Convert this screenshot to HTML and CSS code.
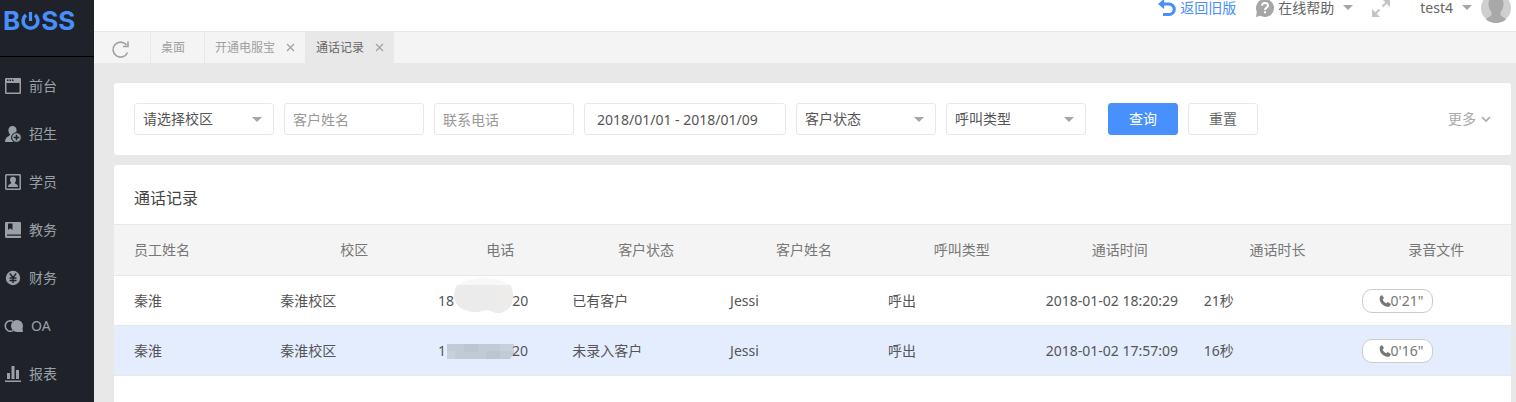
FILE: index.html
```html
<!DOCTYPE html>
<html lang="zh-CN">
<head>
    <meta charset="UTF-8">
    <meta name="viewport" content="width=device-width, initial-scale=1.0">
    <title>通话记录</title>
    <link rel="stylesheet" href="styles.css">
</head>
<body>

<aside class="sidebar">
    <div class="logo">
        <span>B</span>
        <svg width="19" height="20" viewBox="0 0 19 20" fill="none" stroke="currentColor" stroke-width="3.600">
            <path d="M5 4A7.400 7.400 0 1 0 14 4"/>
            <path d="M9.500 1v9" stroke-width="3.200"/>
        </svg>
        <span>SS</span>
    </div>
    <nav class="menu">
        <a href="#">
            <svg width="16" height="16" viewBox="0 0 16 16"><path fill="currentColor" fill-rule="evenodd" d="M1 0h14a1 1 0 0 1 1 1v14a1 1 0 0 1-1 1H1a1 1 0 0 1-1-1V1a1 1 0 0 1 1-1zM1.500 5v9.500h13V5zM2 1.500v1.500h1.500V1.500zM4.500 1.500v1.500H6V1.500zM7 1.500v1.500h1.500V1.500z"/></svg>
            前台
        </a>
        <a href="#">
            <svg width="16" height="16" viewBox="0 0 16 16">
                <path fill="currentColor" d="M7.500 0C10 0 11.600 1.800 11.600 4c0 1-.3 2-.9 2.800A5 5 0 0 0 8 15.500V16H0c0-3.500 1.500-5 4.500-6.500.6-.4.6-1 .1-1.700C3.700 6.700 3.400 5.300 3.400 4 3.400 1.800 5 0 7.500 0z"/>
                <circle cx="11.500" cy="11.500" r="4.800" fill="currentColor" stroke="#1f2329" stroke-width="1"/>
                <path d="M11.500 8.700v5.600M8.700 11.500h5.600" stroke="#1f2329" stroke-width="1.600"/>
            </svg>
            招生
        </a>
        <a href="#">
            <svg width="16" height="16" viewBox="0 0 16 16">
                <rect x=".8" y=".8" width="14.400" height="14.400" rx=".5" fill="none" stroke="currentColor" stroke-width="1.500"/>
                <path fill="currentColor" d="M8 2.800c1.900 0 3 1.300 3 3 0 1.200-.4 2-1.100 2.700v.9c1.800.6 3.100 1.200 3.100 3.600H3c0-2.400 1.300-3 3.100-3.600v-.9C5.400 7.800 5 7 5 5.800c0-1.700 1.100-3 3-3z"/>
            </svg>
            学员
        </a>
        <a href="#">
            <svg width="16" height="16" viewBox="0 0 16 16"><path fill="currentColor" fill-rule="evenodd" d="M1 0h14a1 1 0 0 1 1 1v11.500H2v1.300h14V16H1.500A1.500 1.500 0 0 1 0 14.500V1a1 1 0 0 1 1-1zM3 1.500V8l2.200-1.800L7.500 8V1.500z"/></svg>
            教务
        </a>
        <a href="#">
            <svg width="16" height="16" viewBox="0 0 16 16">
                <circle cx="8" cy="8" r="7.200" fill="currentColor"/>
                <path d="M4.800 3.500L8 7.500l3.200-4M8 7.500v5.500M4.500 8h7M4.500 10.500h7" fill="none" stroke="#1f2329" stroke-width="1.400"/>
            </svg>
            财务
        </a>
        <a href="#">
            <svg width="18" height="16" viewBox="0 0 18 16">
                <path d="M8 3.300A5.300 5.300 0 1 0 8 12.700" fill="none" stroke="currentColor" stroke-width="1.500"/>
                <path fill="currentColor" d="M12 2a6 6 0 0 1 5.500 8.300l.5 3.700h-6A6 6 0 0 1 12 2z"/>
            </svg>
            OA
        </a>
        <a href="#">
            <svg width="16" height="16" viewBox="0 0 16 16"><path fill="currentColor" d="M2 7h3v6H2zM6.500 0h3v13h-3zM11 4h3v9h-3zM0 14.500h16V16H0z"/></svg>
            报表
        </a>
    </nav>
</aside>

<div class="main">
    <header class="topbar">
        <a class="back" href="#">
            <svg width="18" height="18" viewBox="0 0 18 18"><path d="M3 5h8a5 5 0 0 1 0 10.500H5" fill="none" stroke="currentColor" stroke-width="3.200"/><path d="M0 5l6-5v10z" fill="currentColor"/></svg>
            返回旧版
        </a>
        <button class="top-item help">
            <svg width="18" height="18" viewBox="0 0 18 18"><path fill="#a6a6a6" d="M9 0a9 9 0 1 1-4.500 16.800L0 18l.8-5.200A9 9 0 0 1 9 0z"/><path d="M6 6.800C6 3 12 3 12 6.600c0 2-3 2.100-3 4.400M9 12.200v2" fill="none" stroke="#fff" stroke-width="2"/></svg>
            在线帮助
            <i class="caret"></i>
        </button>
        <button class="full" aria-label="全屏">
            <svg width="18" height="18" viewBox="0 0 18 18" fill="none" stroke="#c4c4c4" stroke-width="2"><path d="M10.500 7.500L15 3M7.500 10.500L3 15"/><path fill="#c4c4c4" stroke="none" d="M10 0h8v8l-2.800-2.800-2.400-2.400zM8 18H0v-8l2.800 2.800 2.400 2.400z"/></svg>
        </button>
        <button class="top-item user">
            test4
            <i class="caret"></i>
            <svg width="30" height="30" viewBox="0 0 30 30"><circle cx="15" cy="15" r="15" fill="#cfcfcf"/><path fill="#a8a8a8" d="M15 3c5 0 7.500 3 7.500 8 0 3-1 6-3 8v3c1 1.500 3 2 5.500 4.200a15 15 0 0 1-20 0C7.500 24 9.500 23.500 10.500 22v-3c-2-2-3-5-3-8 0-5 2.500-8 7.500-8z"/></svg>
        </button>
    </header>

    <div class="tabs">
        <button class="refresh" aria-label="刷新">
            <svg width="18" height="18" viewBox="0 0 18 18"><path d="M15.500 12.500A7.500 7.500 0 1 1 14.500 5" fill="none" stroke="#a0a0a0" stroke-width="1.600"/><path d="M16 1.500v5h-5" fill="none" stroke="#a0a0a0" stroke-width="1.600"/></svg>
        </button>
        <a class="tab" href="#">桌面</a>
        <a class="tab" href="#">开通电服宝 <svg width="9" height="9" viewBox="0 0 9 9"><path d="M1 1l7 7M8 1l-7 7" stroke="#a0a0a0" stroke-width="1.200"/></svg></a>
        <a class="tab active" href="#">通话记录 <svg width="9" height="9" viewBox="0 0 9 9"><path d="M1 1l7 7M8 1l-7 7" stroke="#a0a0a0" stroke-width="1.200"/></svg></a>
    </div>

    <div class="content">
        <form class="panel filters">
            <div class="select">
                <select aria-label="校区"><option>请选择校区</option></select>
            </div>
            <input type="text" aria-label="客户姓名" placeholder="客户姓名">
            <input type="text" aria-label="联系电话" placeholder="联系电话">
            <input type="text" class="date" aria-label="日期" value="2018/01/01 - 2018/01/09">
            <div class="select">
                <select aria-label="客户状态"><option>客户状态</option></select>
            </div>
            <div class="select">
                <select aria-label="呼叫类型"><option>呼叫类型</option></select>
            </div>
            <div class="actions">
                <button type="button" class="btn primary">查询</button>
                <button type="button" class="btn">重置</button>
            </div>
            <a class="more" href="#">更多 <svg width="10" height="7" viewBox="0 0 10 7"><path d="M1 1l4 4 4-4" fill="none" stroke="currentColor" stroke-width="1.600"/></svg></a>
        </form>

        <section class="panel records">
            <h2>通话记录</h2>
            <table>
                <colgroup>
                    <col class="col-name">
                    <col class="col">
                    <col class="col-phone">
                    <col class="col">
                    <col class="col">
                    <col class="col">
                    <col class="col">
                    <col class="col">
                    <col>
                </colgroup>
                <thead>
                    <tr>
                        <th>员工姓名</th>
                        <th>校区</th>
                        <th>电话</th>
                        <th>客户状态</th>
                        <th>客户姓名</th>
                        <th>呼叫类型</th>
                        <th>通话时间</th>
                        <th>通话时长</th>
                        <th>录音文件</th>
                    </tr>
                </thead>
                <tbody>
                    <tr>
                        <td>秦淮</td>
                        <td>秦淮校区</td>
                        <td>
                            <div class="phone">18<svg width="58" height="46" viewBox="0 0 58 46"><path fill="#f8f8f8" d="M3 8C10 2 20 0 30 0c12 0 22 3 26 8z"/><path fill="#ebebeb" d="M3 7h53c3 5 4 12 2 18-2 5-6 9-13 10-6 0-9-3-13-3-5 2-12 3-18 1C5 31 0 25 0 18 0 13 1 10 3 7z"/><path fill="#eeecea" d="M41 7h15c3 5 4 12 2 18-2 5-6 9-13 10h-4z"/></svg>20</div>
                        </td>
                        <td>已有客户</td>
                        <td>Jessi</td>
                        <td>呼出</td>
                        <td>2018-01-02 18:20:29</td>
                        <td>21秒</td>
                        <td><button class="audio"><svg width="12" height="12" viewBox="0 0 12 12"><path fill="currentColor" d="M1 1.500L3 0l2 3-1.300 1.500c.6 1.700 1.800 3 3.500 3.800L8.700 7l3.300 2-1.200 2.200C6 13.500-1 7.500 1 1.500z"/></svg>0'21"</button></td>
                    </tr>
                    <tr class="hover">
                        <td>秦淮</td>
                        <td>秦淮校区</td>
                        <td>
                            <div class="phone">1<svg width="66" height="16" viewBox="0 0 66 16"><path fill="#c3cad7" d="M1 1h67v9l-4 6H1z"/><path fill="#bdc5d2" d="M18 1h14v8H18zM40 8h14v8H40z"/><path fill="#c8d0de" d="M54 1h14v7H54zM1 8h8v8H1z"/></svg>20</div>
                        </td>
                        <td>未录入客户</td>
                        <td>Jessi</td>
                        <td>呼出</td>
                        <td>2018-01-02 17:57:09</td>
                        <td>16秒</td>
                        <td><button class="audio"><svg width="12" height="12" viewBox="0 0 12 12"><path fill="currentColor" d="M1 1.500L3 0l2 3-1.300 1.500c.6 1.700 1.800 3 3.500 3.800L8.700 7l3.300 2-1.200 2.200C6 13.500-1 7.500 1 1.500z"/></svg>0'16"</button></td>
                    </tr>
                </tbody>
            </table>
        </section>
    </div>
</div>

</body>
</html>
```
FILE: styles.css
```css
* {
    box-sizing: border-box;
}

body {
    margin: 0;
    display: flex;
    height: 100vh;
    overflow: hidden;
    background-color: #e8e8e8;
    color: #555;
    font-family: "Noto Sans", "Noto Sans CJK SC", sans-serif;
    font-size: 14px;
    line-height: 20px;
}

a {
    color: inherit;
    text-decoration: none;
}

button, input, select {
    font: inherit;
    color: inherit;
}

button {
    padding: 0;
    border: none;
    background: none;
    cursor: pointer;
}

svg {
    flex: none;
    overflow: visible;
}

/* sidebar */
.sidebar {
    flex: none;
    width: 94px;
    background-color: #1f2329;
    color: #9aa0a8;
}

.logo {
    display: flex;
    align-items: center;
    gap: 1px;
    height: 57px;
    padding: 0 0 14px 3px;
    border-bottom: 1px solid #000;
    color: #468ffc;
    font-family: Inter, sans-serif;
    font-size: 26px;
    font-weight: 700;
}

.menu {
    padding-top: 5px;
}

.menu a {
    display: flex;
    align-items: center;
    gap: 8px;
    height: 48px;
    padding-left: 5px;
}

/* top bar, slides up under the window edge */
.main {
    flex: 1;
    min-width: 0;
    display: flex;
    flex-direction: column;
}

.topbar {
    flex: none;
    display: flex;
    align-items: center;
    justify-content: flex-end;
    height: 48px;
    margin-top: -16px;
    padding-right: 5px;
    background-color: #fff;
    border-bottom: 1px solid #e8e8e8;
    color: #666;
}

.back, .top-item {
    display: flex;
    align-items: center;
    gap: 4px;
}

.back {
    color: #468ffc;
}

.help {
    margin-left: 20px;
}

.full {
    height: 18px;
    margin: 0 30px 0 19px;
}

.full svg {
    display: block;
}

.caret {
    margin: 0 5px;
    border: 5px solid transparent;
    border-top-color: #a6a6a6;
    border-bottom: none;
}

.help .caret {
    margin-right: 0;
}

/* tabs */
.tabs {
    flex: none;
    display: flex;
    height: 31px;
    background-color: #f4f4f4;
    color: #a0a0a0;
    font-size: 12px;
}

.refresh {
    display: flex;
    align-items: center;
    width: 56px;
    padding: 2px 0 0 18px;
}

.tab {
    display: flex;
    align-items: center;
    gap: 11px;
    padding: 0 10px;
    border-left: 1px solid #e8e8e8;
}

.tab:nth-child(2) {
    padding-right: 19px;
}

.tab.active {
    background-color: #e8e8e8;
    color: #666;
}

/* content */
.content {
    flex: 1;
    display: flex;
    flex-direction: column;
    gap: 10px;
    padding: 20px 5px 0 20px;
}

.panel {
    background-color: #fff;
    border-radius: 3px;
}

.filters {
    display: flex;
    align-items: center;
    gap: 10px;
    padding: 20px;
}

.filters input, .select select {
    width: 140px;
    height: 32px;
    padding: 0 8px;
    border: 1px solid #e8e8e8;
    border-radius: 3px;
    background-color: #fff;
    outline: none;
}

.filters input::placeholder {
    color: #999;
}

.filters .date {
    width: 202px;
    padding: 0 12px;
}

.select {
    position: relative;
}

.select select {
    display: block;
    appearance: none;
}

.select::after {
    content: "";
    position: absolute;
    top: 14px;
    right: 12px;
    border: 5px solid transparent;
    border-top-color: #a6a6a6;
    border-bottom: none;
    pointer-events: none;
}

.actions {
    display: flex;
    gap: 10px;
    margin-left: 12px;
}

.btn {
    width: 70px;
    height: 32px;
    border: 1px solid #e8e8e8;
    border-radius: 3px;
    color: #666;
}

.btn.primary {
    background-color: #4890fc;
    border-color: #4890fc;
    color: #fff;
}

.more {
    display: flex;
    align-items: center;
    gap: 5px;
    margin-left: auto;
    color: #aaa;
}

/* call records */
.records {
    flex: 1;
    border-radius: 3px 3px 0 0;
}

h2 {
    margin: 0;
    padding: 23px 20px 16px;
    color: #444;
    font-size: 16px;
    font-weight: normal;
}

table {
    width: 100%;
    table-layout: fixed;
    border-collapse: separate;
    border-spacing: 0;
}

.col-name {
    width: 11.9%;
}

.col {
    width: 11.3%;
}

.col-phone {
    width: 9.6%;
}

th, td {
    height: 50px;
    padding: 0 10px 0 0;
    border-bottom: 1px solid #e8e8e8;
    text-align: left;
    white-space: nowrap;
}

th {
    height: 52px;
    border-top: 1px solid #e8e8e8;
    background-color: #f4f4f4;
    color: #777;
    font-weight: normal;
    text-align: center;
}

th:first-child, td:first-child {
    padding-left: 20px;
    text-align: left;
}

th:last-child, td:last-child {
    padding-right: 0;
}

.hover td {
    background-color: #e4edfe;
}

.phone {
    display: flex;
    align-items: center;
}

.audio {
    display: flex;
    align-items: center;
    width: 71px;
    height: 24px;
    padding-left: 16px;
    border: 1px solid #ccc;
    border-radius: 10px;
    background-color: #fff;
    color: #777;
}
```
